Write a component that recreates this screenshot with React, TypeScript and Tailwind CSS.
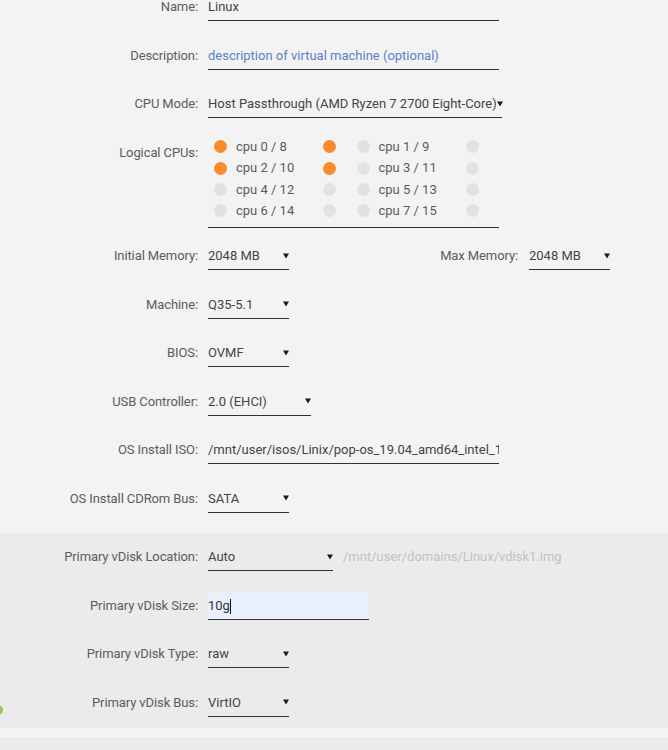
import React from "react";

const FONT = { fontFamily: "Roboto, 'Liberation Sans', sans-serif" };

function Arrow() {
  return (
    <svg width="6" height="6" viewBox="0 0 6 6" className="shrink-0">
      <polygon points="0,0.5 6,0.5 3,5.5" fill="#1a1a1a" />
    </svg>
  );
}

function Label({ children, w = "w-[198px]" }: { children: React.ReactNode; w?: string }) {
  return (
    <div className={`${w} shrink-0 text-right leading-[28px] pt-[1px] text-[#5c5c5c] tracking-[-0.1px]`}>{children}</div>
  );
}

function TextBox({ children, w, color = "text-[#444]" }: { children: React.ReactNode; w: string; color?: string }) {
  return (
    <div className={`${w} h-[29px] border-b border-[#333] leading-[28px] pt-[1px] ${color} overflow-hidden whitespace-nowrap`}>
      {children}
    </div>
  );
}

function Select({ value, w }: { value: string; w: string }) {
  return (
    <div className={`${w} h-[29px] border-b border-[#333] flex items-center justify-between text-[#444] whitespace-nowrap pt-[1px]`}>
      <span className="leading-[27px]">{value}</span>
      <Arrow />
    </div>
  );
}

function Row({ label, children, className = "" }: { label: string; children: React.ReactNode; className?: string }) {
  return (
    <div className={`flex items-start ${className}`}>
      <Label>{label}</Label>
      <div className="ml-[10px] flex items-start">{children}</div>
    </div>
  );
}

const cores = [
  [true, "cpu 0 / 8", true, false, "cpu 1 / 9", false],
  [true, "cpu 2 / 10", true, false, "cpu 3 / 11", false],
  [false, "cpu 4 / 12", false, false, "cpu 5 / 13", false],
  [false, "cpu 6 / 14", false, false, "cpu 7 / 15", false],
] as const;

function Dot({ on }: { on: boolean }) {
  return <div className={`w-[13px] h-[13px] rounded-full shrink-0 ${on ? "bg-[#f98b2c]" : "bg-[#e2e2e2]"}`} />;
}

function CoreCell({ a, text, b }: { a: boolean; text: string; b: boolean }) {
  return (
    <div className="flex items-center w-[145px]">
      <Dot on={a} />
      <span className="ml-[9px] w-[87px] text-[#5c5c5c]">{text}</span>
      <Dot on={b} />
    </div>
  );
}

export default function App() {
  return (
    <div className="w-[668px] h-[750px] overflow-hidden bg-[#f3f3f3] text-[13px]" style={FONT}>
      <div className="flex flex-col">
        <Row label="Name:" className="-mt-[8px]">
          <TextBox w="w-[291px]">Linux</TextBox>
        </Row>
        <Row label="Description:" className="mt-[19.5px]">
          <TextBox w="w-[291px]" color="text-[#5b7fcb]">description of virtual machine (optional)</TextBox>
        </Row>
        <Row label="CPU Mode:" className="mt-[19.5px]">
          <Select w="w-[294px]" value="Host Passthrough (AMD Ryzen 7 2700 Eight-Core)" />
        </Row>
        <div className="flex items-start mt-[18px]">
          <div className="w-[198px] shrink-0 text-right leading-[28px] pt-[3px] text-[#5c5c5c] tracking-[-0.1px]">Logical CPUs:</div>
          <div className="ml-[10px] w-[291px] border-b border-[#333] pb-[5px] pl-[6px]">
            {cores.map((c, i) => (
              <div key={i} className="flex items-center h-[21.4px]">
                <CoreCell a={c[0]} text={c[1]} b={c[2]} />
                <CoreCell a={c[3]} text={c[4]} b={c[5]} />
              </div>
            ))}
          </div>
        </div>
        <Row label="Initial Memory:" className="mt-[13.5px]">
          <Select w="w-[81px]" value="2048 MB" />
          <Label w="w-[229px]">Max Memory:</Label>
          <div className="ml-[11px]">
            <Select w="w-[81px]" value="2048 MB" />
          </div>
        </Row>
        <Row label="Machine:" className="mt-[19.5px]">
          <Select w="w-[81px]" value="Q35-5.1" />
        </Row>
        <Row label="BIOS:" className="mt-[19.5px]">
          <Select w="w-[81px]" value="OVMF" />
        </Row>
        <Row label="USB Controller:" className="mt-[19.5px]">
          <Select w="w-[103px]" value="2.0 (EHCI)" />
        </Row>
        <Row label="OS Install ISO:" className="mt-[19.5px]">
          <TextBox w="w-[291px]">/mnt/user/isos/Linix/pop-os_19.04_amd64_intel_1.iso</TextBox>
        </Row>
        <Row label="OS Install CDRom Bus:" className="mt-[19.5px]">
          <Select w="w-[81px]" value="SATA" />
        </Row>

        <div className="relative mt-[20.5px] bg-[#ebebeb] pt-[9px] pb-[11.5px]">
          <Row label="Primary vDisk Location:">
            <Select w="w-[125px]" value="Auto" />
            <span className="ml-[10px] leading-[28px] pt-[1px] text-[#c2c2c2]">/mnt/user/domains/Linux/vdisk1.img</span>
          </Row>
          <Row label="Primary vDisk Size:" className="mt-[19.5px]">
            <div className="w-[161px] h-[29px] border-b border-[#333] flex flex-col">
              <div className="mt-[2px] h-[26px] bg-[#e8f0fe] text-[#333] flex items-center pt-[1px]">
                <span>10g</span>
                <span className="inline-block w-[1px] h-[15px] bg-[#111]" />
              </div>
            </div>
          </Row>
          <Row label="Primary vDisk Type:" className="mt-[19.5px]">
            <Select w="w-[81px]" value="raw" />
          </Row>
          <Row label="Primary vDisk Bus:" className="mt-[19.5px]">
            <Select w="w-[81px]" value="VirtIO" />
          </Row>
          <div className="absolute left-[-7px] top-[172px] w-[10px] h-[10px] rounded-full bg-[#93c45a]" />
        </div>
        <div className="mt-[9px] h-[40px] bg-[#ebebeb]" />
      </div>
    </div>
  );
}
